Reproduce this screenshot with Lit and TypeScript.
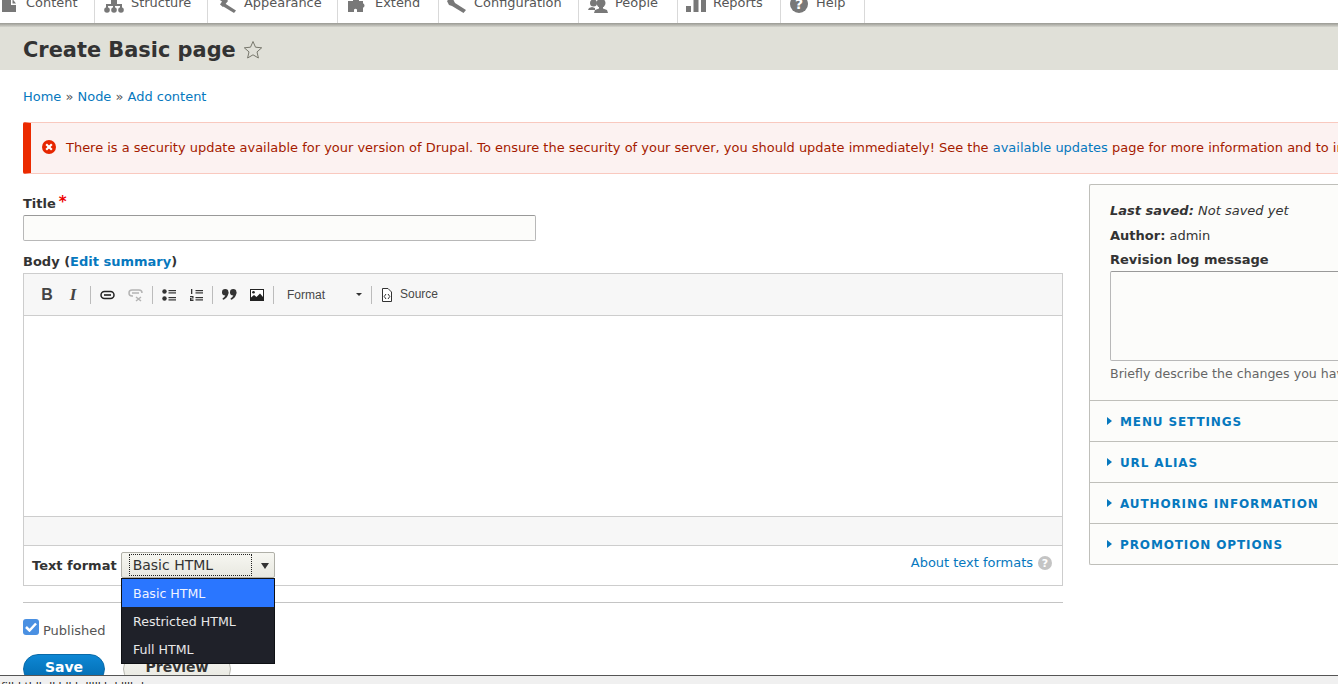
import { LitElement, html, css, svg } from "lit";
import { customElement } from "lit/decorators.js";

const navIcons: Record<string, unknown> = {
  content: svg`<path d="M0-1h9v6h5v7H0zM10.500-1L14 3.500h-3.500z" fill="#787878"/>`,
  structure: svg`<g fill="#787878"><rect x="7" y="-1" width="6" height="5"/><rect x="2" y="4" width="16" height="2"/><rect x="2" y="4" width="2" height="5"/><rect x="9" y="4" width="2" height="5"/><rect x="16" y="4" width="2" height="5"/><circle cx="3" cy="10" r="2.800"/><circle cx="10" cy="10" r="2.800"/><circle cx="17" cy="10" r="2.800"/></g>`,
  appearance: svg`<g fill="#787878"><path d="M8 3.500l11 7-2 2.500L5.500 6z"/><path d="M0-2h9l2 3-5 6-3-2.500 2-3z"/></g>`,
  extend: svg`<path d="M0 1h5v-2h6v2h4v2.200a2.500 2.500 0 0 1 0 4.600V12H9V9.500a2 2 0 0 0-3 0V12H0z" fill="#787878"/>`,
  config: svg`<path d="M0 1l3-3 3 1 2 4 11 7-2.500 3L5 6 2 5z" fill="#787878"/>`,
  people: svg`<g fill="#787878"><circle cx="5.500" cy="3" r="3.500"/><path d="M0 10l1-2 3-1 3 1v2z"/><circle cx="13" cy="3" r="4.500"/><path d="M6 13l1-3 4-1.500V7h4v1.500l4 1.500 1 3z"/></g>`,
  reports: svg`<g fill="#787878"><rect x="0" y="6" width="5" height="6"/><rect x="7.500" y="0" width="5" height="12"/><rect x="15" y="-2" width="5" height="14"/></g>`,
  help: svg`<circle cx="9" cy="4" r="9" fill="#787878"/><text x="9" y="9" text-anchor="middle" font-size="14" font-weight="700" font-family="DejaVu Sans" fill="#fff">?</text>`,
};

@customElement("app-root")
export class AppRoot extends LitElement {
  static styles = css`
    :host { display: block; width: 1338px; height: 684px; overflow: hidden; position: relative; background: #fff;
      font-family: "DejaVu Sans", sans-serif; font-size: 13px; color: #333; }
    a { color: #0678be; text-decoration: none; }
    .nav { display: flex; height: 23px; background: #fff; overflow: hidden; }
    .nav-item { height: 23px; display: flex; align-items: flex-start; border-right: 1px solid #d9d9d9; color: #565656; font-size: 12.950px; box-sizing: border-box; }
    .nav-item span { line-height: 13px; margin-top: -4px; white-space: nowrap; }
    .nav-item svg { flex: none; overflow: visible; }
    .shadow { height: 4px; background: linear-gradient(#9a9a94, #b5b5ae 50%, #d4d4cd); }
    .head { height: 43px; background: #e0e0d8; display: flex; align-items: center; padding: 3px 23px 0; box-sizing: border-box; }
    h1 { margin: 0; font-size: 20.900px; line-height: 1; font-weight: 700; color: #333; }
    .star { margin-left: 7px; flex: none; }
    .crumbs { margin: 20px 0 0 23px; line-height: 14px; height: 14px; font-size: 12.970px; color: #555; }
    .msg { margin: 18px 0 0 23px; width: 1400px; height: 52px; box-sizing: border-box; background: #fcf2f1; border: 1px solid #f9c9bf; border-left: 8px solid #eb2a00; display: flex; align-items: center; padding: 0 0 2px 10px; color: #a51b00; white-space: nowrap; gap: 9px; border-radius: 2px 0 0 2px; font-size: 12.970px; }
    .msg svg { flex: none; }
    .main { display: flex; margin-top: 10px; align-items: flex-start; }
    .left { margin-left: 23px; width: 1040px; flex: none; }
    .right { margin-left: 26px; width: 300px; flex: none; box-sizing: border-box; background: #fcfcfa; border: 1px solid #bfbfba; border-right: 0; border-radius: 2px 0 0 2px; }
    .lbl { font-weight: 700; font-size: 13px; line-height: 15px; color: #333; display: block; white-space: nowrap; }
    .req { color: #ee0000; font-size: 15px; margin-left: 3px; line-height: 10px; position: relative; top: -1px; }
    .title-lbl { margin-top: 12px; height: 19px; }
    .input { width: 513px; height: 26px; box-sizing: border-box; border: 1px solid #b8b8b8; border-top-color: #999; border-radius: 2px; background: #fcfcfa; }
    .body-lbl { margin-top: 13px; height: 19px; }
    .editor { border: 1px solid #cdcdcd; border-bottom: 0; box-sizing: border-box; height: 272px; display: flex; flex-direction: column; }
    .toolbar { height: 42px; flex: none; background: #f7f7f7; border-bottom: 1px solid #cdcdcd; display: flex; align-items: center; padding-left: 16px; box-sizing: border-box; font-family: "Liberation Sans", Arial, sans-serif; font-size: 12px; color: #474747; }
    .toolbar svg { flex: none; }
    .tb { width: 14px; height: 14px; flex: none; display: flex; align-items: center; justify-content: center; }
    .sep { width: 1px; height: 18px; background: #bcbcbc; flex: none; }
    .bl { font-family: "Liberation Sans", Arial, sans-serif; font-weight: 700; font-size: 16px; color: #444; }
    .it { font-family: "Liberation Serif", serif; font-style: italic; font-weight: 700; font-size: 17px; color: #444; }
    .area { flex: 1; background: #fff; border-bottom: 1px solid #cdcdcd; }
    .status { height: 28px; flex: none; background: #f7f7f7; }
    .fmtbox { border: 1px solid #cdcdcd; height: 41px; box-sizing: border-box; display: flex; align-items: center; padding: 0 10px 0 8px; }
    .fmtbox .lbl { margin-right: 4px; }
    .sel { position: relative; width: 154px; height: 26px; box-sizing: border-box; border: 1px solid #b0b0a8; border-radius: 2px; background: linear-gradient(#f7f7f2, #e8e8e0); font-size: 14px; color: #333; line-height: 24px; padding-left: 11px; flex: none; margin-top: -2px; }
    .sel::before { content: ""; position: absolute; left: 7px; top: 1px; width: 121px; height: 20px; border: 1px dotted #222; }
    .sel::after { content: ""; position: absolute; right: 5px; top: 10px; border: 4px solid transparent; border-top: 6px solid #333; border-bottom: 0; }
    .dd { position: absolute; left: 121px; top: 578px; width: 154px; height: 86px; box-sizing: border-box; border: 1px solid #0e1014; background: #1f2129; color: #e8e8e8; font-size: 12.600px; z-index: 3; }
    .dd div { height: 28px; line-height: 30px; padding-left: 11px; }
    .dd .on { background: #2a76ff; color: #f0f4ff; }
    .about { margin-left: auto; display: flex; align-items: center; gap: 5px; margin-top: -6px; font-size: 12.970px; }
    hr { border: 0; border-top: 1px solid #c4c4c4; margin: 16px 0 0; }
    .pub { display: flex; align-items: center; margin-top: 17px; height: 20px; color: #555; }
    .check { width: 16px; height: 16px; background: #4a90e2; border-radius: 3px; display: flex; align-items: center; justify-content: center; margin-right: 4px; margin-top: -7px; flex: none; }
    .btns { display: flex; gap: 18px; margin-top: 14px; }
    .btn { height: 30px; border-radius: 15px; box-sizing: border-box; font-weight: 700; font-size: 14px; text-align: center; line-height: 25px; flex: none; }
    .save { width: 82px; background: linear-gradient(#0e87d4, #0069ad); color: #fff; border: 1px solid #0a6aa8; }
    .prev { width: 108px; background: linear-gradient(#f5f5f0, #e8e8e0); color: #333; border: 1px solid #b8b8b0; }
    .meta { padding: 18px 0 0 20px; white-space: nowrap; line-height: 15px; height: 216px; box-sizing: border-box; border-bottom: 1px solid #bfbfba; overflow: hidden; color: #333; }
    .meta p { margin: 0 0 9px; }
    .meta p:first-child { margin-bottom: 10px; }
    .meta .lbl { margin-bottom: 4px; }
    .ta { width: 300px; height: 90px; box-sizing: border-box; border: 1px solid #b8b8b8; border-top-color: #999; border-radius: 2px; background: #fcfcfa; }
    .hint { color: #666; margin-top: 5px; font-size: 12.600px; }
    .acc { height: 41px; border-bottom: 1px solid #bfbfba; box-sizing: border-box; display: flex; align-items: center; padding: 2px 0 0 17px; color: #0678be; font-weight: 700; letter-spacing: 0.880px; font-size: 12px; gap: 8px; white-space: nowrap; }
    .acc:last-child { border-bottom: 0; height: 40px; }
    .acc i { border: 4px solid transparent; border-left: 5px solid #0678be; border-right: 0; width: 0; height: 0; margin-top: -2px; }
    .bottom { position: absolute; left: 0; right: 0; top: 675px; height: 9px; background: #f0f0f0; border-top: 1px solid #555; box-sizing: border-box; overflow: hidden; font-size: 11px; line-height: 12px; color: #222; z-index: 4; padding-left: 1px; white-space: nowrap; }
    .bottom span { position: relative; top: 5px; }
  `;

  private nav(label: string, icon: string, w: number, iw: number, pad: number, gap: number) {
    return html`<div class="nav-item" style="width:${w}px;padding-left:${pad}px">
      <svg width=${iw} height="14" viewBox="0 0 ${iw} 14" style="margin-right:${gap}px">${navIcons[icon]}</svg><span>${label}</span></div>`;
  }

  render() {
    return html`
      <div class="nav">
        ${this.nav("Content", "content", 95, 14, 2, 10)}
        ${this.nav("Structure", "structure", 113, 20, 9, 7)}
        ${this.nav("Appearance", "appearance", 130, 20, 9, 7)}
        ${this.nav("Extend", "extend", 101, 20, 10, 7)}
        ${this.nav("Configuration", "config", 140, 20, 8, 7)}
        ${this.nav("People", "people", 99, 20, 9, 7)}
        ${this.nav("Reports", "reports", 103, 20, 8, 7)}
        ${this.nav("Help", "help", 84, 18, 9, 8)}
      </div>
      <div class="shadow"></div>
      <div class="head"><h1>Create Basic page</h1>
        <svg class="star" width="20" height="20" viewBox="0 0 20 20"><path d="M10 1.500l2.500 5.700 6.200.6-4.700 4.100 1.400 6.100L10 14.800 4.600 18l1.400-6.100L1.300 7.800l6.200-.6z" fill="none" stroke="#77776c" stroke-width="1"/></svg>
      </div>
      <div class="crumbs"><a>Home</a> » <a>Node</a> » <a>Add content</a></div>
      <div class="msg">
        <svg width="16" height="16" viewBox="0 0 16 16"><circle cx="8" cy="8" r="7" fill="#e62600"/><path d="M5.200 5.200l5.600 5.600M10.800 5.200l-5.600 5.600" stroke="#fff" stroke-width="2.200"/></svg>
        <span>There is a security update available for your version of Drupal. To ensure the security of your server, you should update immediately! See the <a>available updates</a> page for more information and to install your missing updates.</span>
      </div>
      <div class="main">
        <div class="left">
          <div class="lbl title-lbl">Title<span class="req">*</span></div>
          <div class="input"></div>
          <div class="lbl body-lbl">Body (<a>Edit summary</a>)</div>
          <div class="editor">
            <div class="toolbar">
              <div class="tb bl">B</div><div class="tb it" style="margin-left:12px">I</div>
              <div class="sep" style="margin-left:10px"></div>
              <svg style="margin-left:9px" width="15" height="10" viewBox="0 0 15 10"><rect x="1" y="1.500" width="13" height="7" rx="3.500" fill="none" stroke="#222" stroke-width="1.500"/><rect x="4" y="4.200" width="7" height="1.600" fill="#222"/></svg>
              <svg style="margin-left:13px" width="15" height="14" viewBox="0 0 15 14"><g fill="none" stroke="#b4b4b4" stroke-width="1.500"><path d="M5 8H4a3 3 0 0 1 0-6h7a3 3 0 0 1 3 3"/><path d="M4 5h7"/><path d="M8 9l5 4M13 9l-5 4"/></g></svg>
              <div class="sep" style="margin-left:9px"></div>
              <svg style="margin-left:9px" width="14" height="12" viewBox="0 0 14 12"><g fill="#333"><circle cx="2.500" cy="2.500" r="2.200"/><circle cx="2.500" cy="9.500" r="2.200"/><rect x="6.500" y="1" width="7.500" height="1.200"/><rect x="6.500" y="3.300" width="7.500" height="1.200"/><rect x="6.500" y="8" width="7.500" height="1.200"/><rect x="6.500" y="10.300" width="7.500" height="1.200"/></g></svg>
              <svg style="margin-left:14px" width="13" height="12" viewBox="0 0 13 12"><g fill="#333"><rect x="1" y="0" width="1.300" height="5"/><path d="M0 7h3.500v2.500H1.200v1h2.300V12H0V8.700h2.300v-.7H0z"/><rect x="5.500" y="1" width="7.500" height="1.200"/><rect x="5.500" y="3.300" width="7.500" height="1.200"/><rect x="5.500" y="8" width="7.500" height="1.200"/><rect x="5.500" y="10.300" width="7.500" height="1.200"/></g></svg>
              <div class="sep" style="margin-left:9px"></div>
              <svg style="margin-left:9px" width="15" height="11" viewBox="0 0 15 11"><g fill="#333"><circle cx="3.200" cy="3.200" r="3.200"/><path d="M6.400 3.200C6.400 7 4 10 1 10.800L.5 9.500C2.500 8.500 3.500 6.500 3.500 5z"/><circle cx="11.200" cy="3.200" r="3.200"/><path d="M14.400 3.200c0 3.800-2.400 6.800-5.400 7.600l-.5-1.300c2-1 3-3 3-4.500z"/></g></svg>
              <svg style="margin-left:13px" width="14" height="12" viewBox="0 0 14 12"><rect x=".5" y=".5" width="13" height="11" fill="#fff" stroke="#222"/><path d="M1 11V8.500L4 6l2.500 2L10 4.500l3 3.500v3z" fill="#222"/><circle cx="3.500" cy="3.300" r="1.300" fill="#222"/></svg>
              <div class="sep" style="margin-left:9px"></div>
              <div style="margin-left:13px;width:69px;flex:none;color:#474747;position:relative">Format</div>
              <div style="width:0;height:0;border:3.500px solid transparent;border-top:3.500px solid #333;border-bottom:0;flex:none"></div>
              <div class="sep" style="margin-left:9px"></div>
              <svg style="margin-left:10px" width="10" height="14" viewBox="0 0 10 14"><path d="M.5.500h5.500l3.500 3.500v9.500H.5z" fill="#fff" stroke="#333"/><path d="M4 6L2.200 8.500 4 11M6 6l1.800 2.500L6 11" fill="none" stroke="#333"/></svg>
              <div style="margin-left:8px;position:relative;top:-1px">Source</div>
            </div>
            <div class="area"></div>
            <div class="status"></div>
          </div>
          <div class="fmtbox">
            <span class="lbl">Text format</span>
            <div class="sel">Basic HTML</div>
            <div class="about"><a>About text formats</a>
              <svg width="14" height="14" viewBox="0 0 14 14"><circle cx="7" cy="7" r="7" fill="#c4c4c4"/><text x="7" y="11" text-anchor="middle" font-size="11" font-weight="700" font-family="DejaVu Sans" fill="#fff">?</text></svg></div>
          </div>
          <hr />
          <div class="pub"><div class="check"><svg width="12" height="10" viewBox="0 0 12 10"><path d="M1 5l3.500 3.500L11 1.500" fill="none" stroke="#fff" stroke-width="2.500"/></svg></div>Published</div>
          <div class="btns"><div class="btn save">Save</div><div class="btn prev">Preview</div></div>
        </div>
        <div class="right">
          <div class="meta">
            <p><b><i>Last saved:</i></b> <i>Not saved yet</i></p>
            <p><b>Author:</b> admin</p>
            <div class="lbl">Revision log message</div>
            <div class="ta"></div>
            <div class="hint">Briefly describe the changes you have made.</div>
          </div>
          <div class="acc"><i></i>MENU SETTINGS</div>
          <div class="acc"><i></i>URL ALIAS</div>
          <div class="acc"><i></i>AUTHORING INFORMATION</div>
          <div class="acc"><i></i>PROMOTION OPTIONS</div>
        </div>
      </div>
      <div class="dd"><div class="on">Basic HTML</div><div>Restricted HTML</div><div>Full HTML</div></div>
      <div class="bottom"><span>ﬁlld thlkdkhlkl dlllkkd lllbd</span></div>
    `;
  }
}
